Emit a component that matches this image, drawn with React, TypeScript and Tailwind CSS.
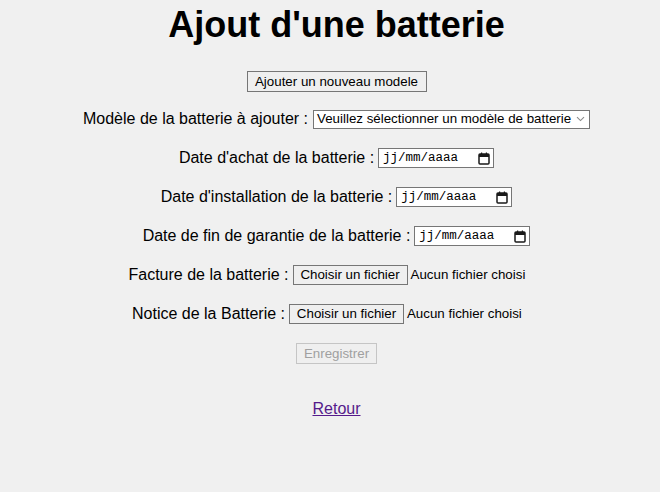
import React from "react";

function CalendarIcon() {
  return (
    <svg width="12" height="13" viewBox="0 0 12 13" className="shrink-0">
      <rect x="1" y="2" width="10" height="10" rx="1" fill="none" stroke="#1a1a1a" strokeWidth="1.5" />
      <rect x="1" y="2" width="10" height="3" fill="#1a1a1a" />
      <rect x="3" y="0.5" width="1.2" height="2" fill="#1a1a1a" />
      <rect x="7.8" y="0.5" width="1.2" height="2" fill="#1a1a1a" />
    </svg>
  );
}

function DateField({ label }: { label: string }) {
  return (
    <div className="flex h-[20px] items-center">
      <span className="text-[16px] leading-[18px] text-black">{label}</span>
      <span className="w-[4px]" />
      <div className="flex h-[20px] w-[116px] items-center justify-between border border-[#767676] bg-white pl-[4px] pr-[3px]">
        <span className="font-['Liberation_Mono',monospace] text-[12.5px] leading-none text-black">
          jj/mm/aaaa
        </span>
        <CalendarIcon />
      </div>
    </div>
  );
}

function FileField({ label }: { label: string }) {
  return (
    <div className="flex h-[20px] items-center">
      <span className="text-[16px] leading-[18px] text-black">{label}</span>
      <span className="w-[4px]" />
      <div className="flex w-[252px] items-center">
        <div className="flex h-[20px] w-[115px] items-center justify-center border border-[#767676] bg-[#efefef] text-[13.33px] text-black">
          Choisir un fichier
        </div>
        <span className="ml-[3px] text-[13.33px] text-black">Aucun fichier choisi</span>
      </div>
    </div>
  );
}

export default function App() {
  return (
    <div className="min-h-[492px] w-[660px] bg-[#f0f0f0] pl-[13px] font-['Liberation_Sans',Arial,sans-serif]">
      <div className="flex flex-col items-center">
        <h1 className="mt-[5px] text-[36px] font-bold leading-[40px] text-black">Ajout d'une batterie</h1>

        <button
          type="button"
          className="mt-[26px] flex h-[21px] w-[180px] items-center justify-center border border-[#767676] bg-[#efefef] text-[13.33px] text-black"
        >
          Ajouter un nouveau modele
        </button>

        <div className="mt-[17px] flex h-[20px] items-center">
          <span className="text-[16px] leading-[18px] text-black">Modèle de la batterie à ajouter :</span>
          <span className="w-[5px]" />
          <div className="flex h-[19px] w-[277px] items-center justify-between border border-[#767676] bg-white pl-[3px] pr-[4px]">
            <span className="text-[13.33px] leading-none text-black">Veuillez sélectionner un modèle de batterie</span>
            <svg width="9" height="6" viewBox="0 0 9 6">
              <path d="M1 1.2 L4.5 4.6 L8 1.2" fill="none" stroke="#8a8a8a" strokeWidth="1.1" />
            </svg>
          </div>
        </div>

        <div className="mt-[19px]">
          <DateField label="Date d'achat de la batterie :" />
        </div>
        <div className="mt-[19px]">
          <DateField label="Date d'installation de la batterie :" />
        </div>
        <div className="mt-[19px]">
          <DateField label="Date de fin de garantie de la batterie :" />
        </div>
        <div className="mt-[19px]">
          <FileField label="Facture de la batterie :" />
        </div>
        <div className="mt-[19px]">
          <FileField label="Notice de la Batterie :" />
        </div>

        <button
          type="button"
          disabled
          className="mt-[19px] flex h-[21px] w-[81px] items-center justify-center border border-[#c5c5c5] bg-[#efefef] text-[13.33px] text-[#a0a0a0]"
        >
          Enregistrer
        </button>

        <a href="#" className="mt-[36px] text-[16px] leading-[18px] text-[#551a8b] underline">
          Retour
        </a>
      </div>
    </div>
  );
}
